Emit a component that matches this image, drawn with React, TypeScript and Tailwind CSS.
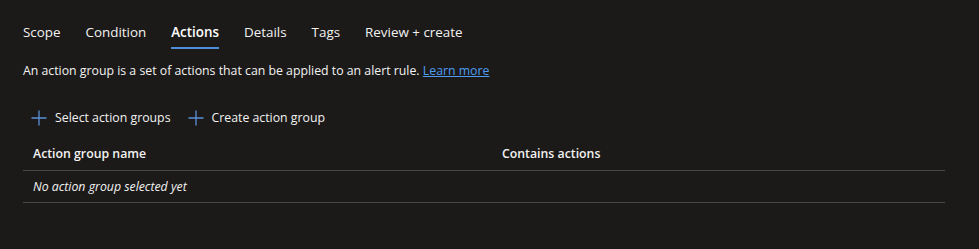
const tabs = ['Scope', 'Condition', 'Actions', 'Details', 'Tags', 'Review + create'];

const PlusIcon = () => (
  <svg width="16" height="16" viewBox="0 0 16 16" className="text-[#5b8fd8]">
    <path d="M8 0.5v15M0.5 8h15" stroke="currentColor" strokeWidth="1.3" fill="none" />
  </svg>
);

export default function App() {
  return (
    <div className="w-[979px] h-[249px] bg-[#1b1a19] text-[#f3f2f1] font-['Open_Sans',sans-serif] pl-[23px] pr-[34px] pt-[21px]">
      <div className="flex gap-[25px] text-[13.4px]">
        {tabs.map((t) => (
          <div key={t} className="flex flex-col">
            <span className={`leading-[22px] ${t === 'Actions' ? 'font-semibold text-white' : 'text-[#f3f2f1]'}`}>{t}</span>
            <div className={`h-[2px] mt-[4px] ${t === 'Actions' ? 'bg-[#4f8edb]' : 'bg-transparent'}`} />
          </div>
        ))}
      </div>
      <p className="text-[12.3px] leading-[20px] mt-[12px]">
        An action group is a set of actions that can be applied to an alert rule.{' '}
        <a href="#" className="text-[#4f9cf2] underline">Learn more</a>
      </p>
      <div className="flex gap-[17px] mt-[27px] pl-[8px] text-[12.3px]">
        <button className="flex items-center gap-[8px] text-[#f3f2f1] h-[20px]">
          <PlusIcon />
          <span>Select action groups</span>
        </button>
        <button className="flex items-center gap-[8px] text-[#f3f2f1] h-[20px]">
          <PlusIcon />
          <span>Create action group</span>
        </button>
      </div>
      <div className="mt-[11px] text-[12.3px]">
        <div className="grid grid-cols-[469px_1fr] h-[32px] items-center border-b border-[#474645] pl-[10px] font-semibold">
          <span>Action group name</span>
          <span>Contains actions</span>
        </div>
        <div className="h-[32px] flex items-center border-b border-[#474645] pl-[10px] pt-[2px] italic">
          No action group selected yet
        </div>
      </div>
    </div>
  );
}
